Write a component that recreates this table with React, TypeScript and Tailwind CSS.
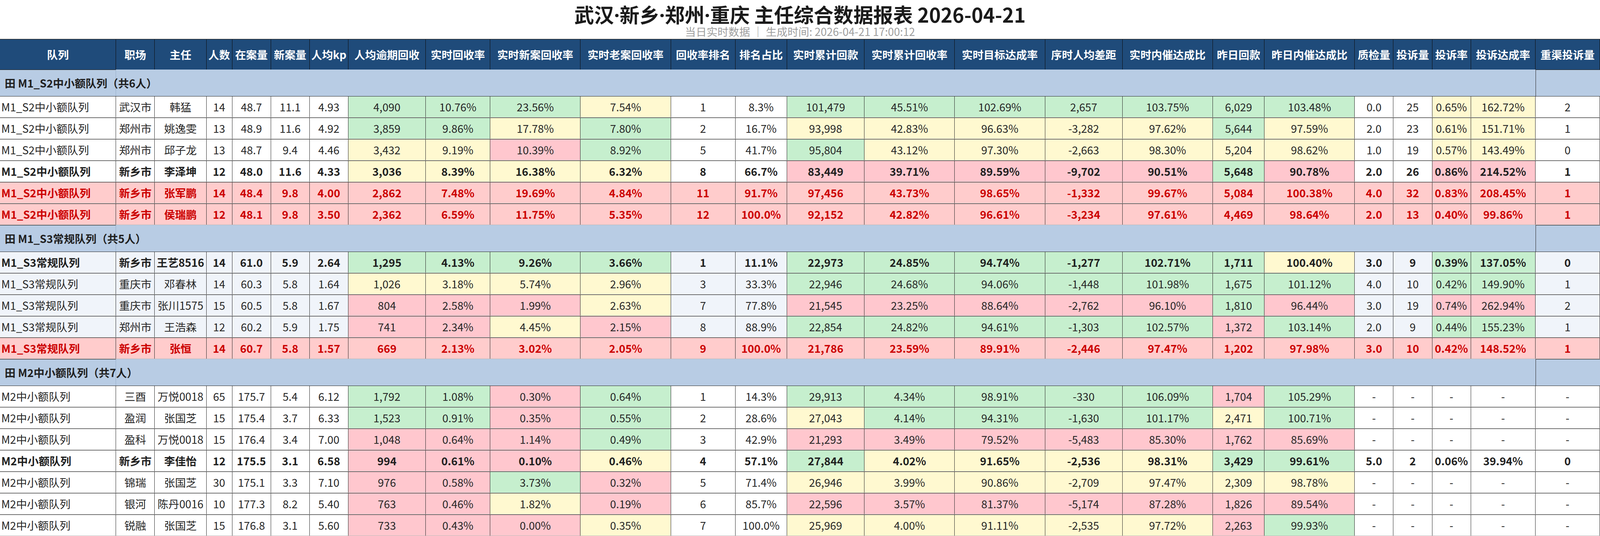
import React from "react";

const GRID =
  "grid grid-cols-[minmax(0,9fr)_minmax(0,3fr)_minmax(0,4fr)_minmax(0,2fr)_minmax(0,3fr)_minmax(0,3fr)_minmax(0,3fr)_minmax(0,6fr)_minmax(0,5fr)_minmax(0,7fr)_minmax(0,7fr)_minmax(0,5fr)_minmax(0,4fr)_minmax(0,6fr)_minmax(0,7fr)_minmax(0,7fr)_minmax(0,6fr)_minmax(0,7fr)_minmax(0,4fr)_minmax(0,7fr)_minmax(0,3fr)_minmax(0,3fr)_minmax(0,3fr)_minmax(0,5fr)_minmax(0,5fr)]";

const HEAD = [
  "队列", "职场", "主任", "人数", "在案量", "新案量", "人均kp", "人均逾期回收", "实时回收率",
  "实时新案回收率", "实时老案回收率", "回收率排名", "排名占比", "实时累计回款", "实时累计回收率",
  "实时目标达成率", "序时人均差距", "实时内催达成比", "昨日回款", "昨日内催达成比", "质检量",
  "投诉量", "投诉率", "投诉达成率", "重渠投诉量",
];

type Row = { kind: "n" | "b" | "red"; cells: string[] };
type Group = { title: string; alt: boolean; rows: Row[] };

const S2 = "M1_S2中小额队列";
const S3 = "M1_S3常规队列";
const M2 = "M2中小额队列";
const D = ["-", "-", "-", "-", "-"];

const GROUPS: Group[] = [
  {
    title: "田 M1_S2中小额队列（共6人）",
    alt: false,
    rows: [
      { kind: "n", cells: [S2, "武汉市", "韩猛", "14", "48.7", "11.1", "4.93", "4,090|g", "10.76%|g", "23.56%|g", "7.54%|y", "1", "8.3%", "101,479|g", "45.51%|g", "102.69%|g", "2,657|g", "103.75%|g", "6,029|g", "103.48%|g", "0.0", "25", "0.65%|y", "162.72%|y", "2"] },
      { kind: "n", cells: [S2, "郑州市", "姚逸雯", "13", "48.9", "11.6", "4.92", "3,859|g", "9.86%|g", "17.78%|y", "7.80%|g", "2", "16.7%", "93,998|y", "42.83%|y", "96.63%|y", "-3,282|y", "97.62%|y", "5,644|g", "97.59%|y", "2.0", "23", "0.61%|y", "151.71%|y", "1"] },
      { kind: "n", cells: [S2, "郑州市", "邱子龙", "13", "48.7", "9.4", "4.46", "3,432|y", "9.19%|y", "10.39%|r", "8.92%|g", "5", "41.7%", "95,804|g", "43.12%|y", "97.30%|y", "-2,663|y", "98.30%|y", "5,204|y", "98.62%|y", "1.0", "19", "0.57%|y", "143.49%|y", "0"] },
      { kind: "b", cells: [S2, "新乡市", "李泽坤", "12", "48.0", "11.6", "4.33", "3,036|y", "8.39%|y", "16.38%|y", "6.32%|y", "8", "66.7%", "83,449|r", "39.71%|r", "89.59%|r", "-9,702|r", "90.51%|r", "5,648|g", "90.78%|r", "2.0", "26", "0.86%|r", "214.52%|r", "1"] },
      { kind: "red", cells: [S2, "新乡市", "张军鹏", "14", "48.4", "9.8", "4.00", "2,862", "7.48%", "19.69%", "4.84%", "11", "91.7%", "97,456", "43.73%", "98.65%", "-1,332", "99.67%", "5,084", "100.38%", "4.0", "32", "0.83%", "208.45%", "1"] },
      { kind: "red", cells: [S2, "新乡市", "侯瑞鹏", "12", "48.1", "9.8", "3.50", "2,362", "6.59%", "11.75%", "5.35%", "12", "100.0%", "92,152", "42.82%", "96.61%", "-3,234", "97.61%", "4,469", "98.64%", "2.0", "13", "0.40%", "99.86%", "1"] },
    ],
  },
  {
    title: "田 M1_S3常规队列（共5人）",
    alt: true,
    rows: [
      { kind: "b", cells: [S3, "新乡市", "王艺8516", "14", "61.0", "5.9", "2.64", "1,295|g", "4.13%|g", "9.26%|g", "3.66%|g", "1", "11.1%", "22,973|g", "24.85%|g", "94.74%|g", "-1,277|g", "102.71%|g", "1,711|g", "100.40%|y", "3.0", "9", "0.39%|g", "137.05%|g", "0"] },
      { kind: "n", cells: [S3, "重庆市", "邓春林", "14", "60.3", "5.8", "1.64", "1,026|y", "3.18%|y", "5.74%|y", "2.96%|y", "3", "33.3%", "22,946|g", "24.68%|g", "94.06%|g", "-1,448|g", "101.98%|g", "1,675|g", "101.12%|g", "4.0", "10", "0.42%|g", "149.90%|g", "1"] },
      { kind: "n", cells: [S3, "重庆市", "张川1575", "15", "60.5", "5.8", "1.67", "804|r", "2.58%|r", "1.99%|r", "2.63%|y", "7", "77.8%", "21,545|r", "23.25%|r", "88.64%|r", "-2,762|r", "96.10%|r", "1,810|g", "96.44%|r", "3.0", "19", "0.74%|r", "262.94%|r", "2"] },
      { kind: "n", cells: [S3, "郑州市", "王浩森", "12", "60.2", "5.9", "1.75", "741|r", "2.34%|r", "4.45%|y", "2.15%|r", "8", "88.9%", "22,854|g", "24.82%|g", "94.61%|g", "-1,303|g", "102.57%|g", "1,372|r", "103.14%|g", "2.0", "9", "0.44%|g", "155.23%|g", "1"] },
      { kind: "red", cells: [S3, "新乡市", "张恒", "14", "60.7", "5.8", "1.57", "669", "2.13%", "3.02%", "2.05%", "9", "100.0%", "21,786", "23.59%", "89.91%", "-2,446", "97.47%", "1,202", "97.98%", "3.0", "10", "0.42%", "148.52%", "1"] },
    ],
  },
  {
    title: "田 M2中小额队列（共7人）",
    alt: false,
    rows: [
      { kind: "n", cells: [M2, "三酉", "万悦0018", "65", "175.7", "5.4", "6.12", "1,792|g", "1.08%|g", "0.30%|r", "0.64%|g", "1", "14.3%", "29,913|g", "4.34%|g", "98.91%|g", "-330|g", "106.09%|g", "1,704|r", "105.29%|g", ...D] },
      { kind: "n", cells: [M2, "盈润", "张国芝", "15", "175.4", "3.7", "6.33", "1,523|g", "0.91%|g", "0.35%|r", "0.55%|g", "2", "28.6%", "27,043|y", "4.14%|g", "94.31%|g", "-1,630|g", "101.17%|g", "2,471|y", "100.71%|g", ...D] },
      { kind: "n", cells: [M2, "盈科", "万悦0018", "15", "176.4", "3.4", "7.00", "1,048|r", "0.64%|r", "1.14%|r", "0.49%|g", "3", "42.9%", "21,293|r", "3.49%|r", "79.52%|r", "-5,483|r", "85.30%|r", "1,762|r", "85.69%|r", ...D] },
      { kind: "b", cells: [M2, "新乡市", "李佳怡", "12", "175.5", "3.1", "6.58", "994|r", "0.61%|r", "0.10%|r", "0.46%|y", "4", "57.1%", "27,844|g", "4.02%|y", "91.65%|y", "-2,536|y", "98.31%|y", "3,429|g", "99.61%|g", "5.0", "2", "0.06%", "39.94%", "0"] },
      { kind: "n", cells: [M2, "锦瑞", "张国芝", "30", "175.1", "3.3", "7.10", "976|r", "0.58%|r", "3.73%|g", "0.32%|r", "5", "71.4%", "26,946|y", "3.99%|y", "90.86%|y", "-2,709|y", "97.47%|y", "2,309|y", "98.78%|y", ...D] },
      { kind: "n", cells: [M2, "银河", "陈丹0016", "10", "177.3", "8.2", "5.40", "763|r", "0.46%|r", "1.82%|y", "0.19%|r", "6", "85.7%", "22,596|r", "3.57%|r", "81.37%|r", "-5,174|r", "87.28%|r", "1,826|r", "89.54%|r", ...D] },
      { kind: "n", cells: [M2, "锐融", "张国芝", "15", "176.8", "3.1", "5.60", "733|r", "0.43%|r", "0.00%|r", "0.35%|y", "7", "100.0%", "25,969|y", "4.00%|y", "91.11%|y", "-2,535|y", "97.72%|y", "2,263|r", "99.93%|g", ...D] },
    ],
  },
];

const FILL: Record<string, string> = {
  g: "bg-[#c6efce]",
  y: "bg-[#fff9d0]",
  r: "bg-[#ffc7ce]",
};

function DataRow({ row, alt }: { row: Row; alt: boolean }) {
  const bg = alt ? "bg-[#f0f4fa]" : "bg-white";
  const base =
    row.kind === "red"
      ? "bg-[#ffcccc] text-[#cc0000] font-bold"
      : row.kind === "b"
      ? `${bg} text-[#1f1f1f] font-bold`
      : `${bg} text-[#262626]`;
  return (
    <div className={`${GRID} h-[4.009vh] border-t border-t-[#2a2a2a] border-b border-b-[#b8b8b8] ${base}`}>
      {row.cells.map((raw, i) => {
        const [v, c] = raw.split("|");
        const fill = c && row.kind !== "red" ? FILL[c] : "";
        return (
          <div
            key={i}
            className={`flex items-center ${i === 0 ? "justify-start pl-[0.08vw]" : "justify-center"} whitespace-nowrap border-r border-r-[#2a2a2a] ${fill}`}
          >
            {v}
          </div>
        );
      })}
    </div>
  );
}

function GroupRow({ title }: { title: string }) {
  return (
    <div className={`${GRID} h-[4.956vh] bg-[#b8cce4] text-[#1f1f1f] font-bold`}>
      <div className="flex items-center whitespace-nowrap pl-[0.29vw] border-t border-t-[#1a1a1a] border-r border-r-[#98adc8]">
        {title}
      </div>
      <div className="col-span-23" />
      <div className="border-t border-t-[#1a1a1a] border-l border-l-[#2a2a2a]" />
    </div>
  );
}

function Dot() {
  return <span className="inline-block leading-none font-['Noto_Sans',sans-serif]">·</span>;
}

export default function App() {
  return (
    <div className="w-full h-screen overflow-hidden bg-white font-['Noto_Sans_CJK_SC','Noto_Sans',sans-serif] text-[length:calc((0.625vw_+_2.187vh)/2)]">
      <div className="h-[7.216vh] flex flex-col items-center">
        <div className="text-[length:calc((1.14vw_+_4vh)/2)] leading-[1.45] font-bold text-[#1a1a1a] whitespace-nowrap">
          武汉<Dot />新乡<Dot />郑州<Dot />重庆 主任综合数据报表 2026-04-21
        </div>
        <div className="-mt-[1vh] leading-[1.45] text-[#9e9e9e] whitespace-nowrap">
          当日实时数据 │ 生成时间: 2026-04-21 17:00:12
        </div>
      </div>
      <div className="border-t border-t-[#c4c4c4]">
        <div className={`${GRID} h-[5.685vh] bg-[#1f4b7a] text-white font-bold border-t border-t-[#111111]`}>
          {HEAD.map((h, i) => (
            <div key={i} className="flex items-center justify-center whitespace-nowrap border-r border-r-[#0e0e0e]">
              {h}
            </div>
          ))}
        </div>
        {GROUPS.map((g, gi) => (
          <React.Fragment key={gi}>
            <GroupRow title={g.title} />
            {g.rows.map((r, ri) => (
              <DataRow key={ri} row={r} alt={g.alt} />
            ))}
          </React.Fragment>
        ))}
      </div>
    </div>
  );
}
